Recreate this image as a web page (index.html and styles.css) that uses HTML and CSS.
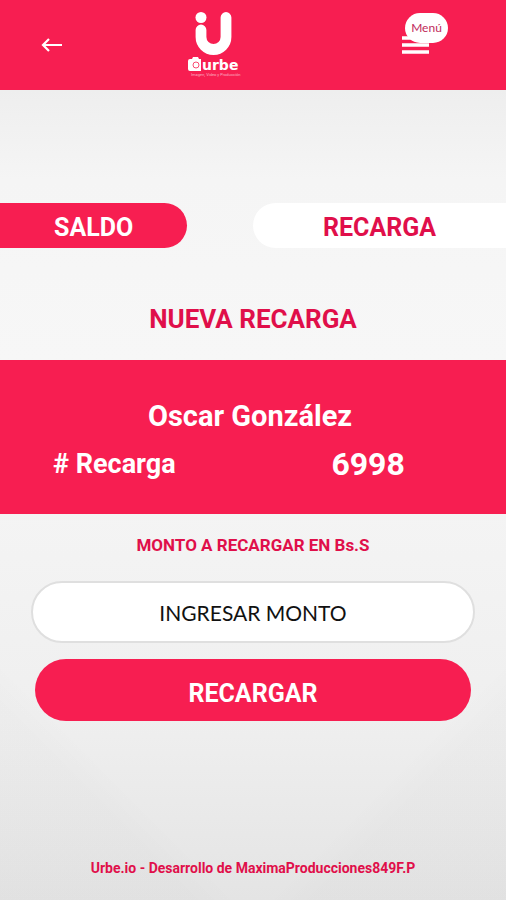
FILE: index.html
```html
<!DOCTYPE html>
<html lang="es">

<head>
    <meta charset="UTF-8">
    <meta name="viewport" content="width=device-width, initial-scale=1.0">
    <title>Urbe - Nueva Recarga</title>
    <link rel="stylesheet" href="styles.css">
</head>

<body>
    <header class="topbar">
        <button type="button" class="back" aria-label="Volver">
            <svg width="22" height="16" viewBox="0 0 22 16">
                <path d="M21 8H2M8 2L2 8l6 6" fill="none" stroke="#fff" stroke-width="2.2" />
            </svg>
        </button>
        <a href="#" class="logo" aria-label="Urbe">
            <svg width="54" height="66" viewBox="0 0 54 66">
                <circle cx="14" cy="5.5" r="5.5" fill="#fff" />
                <path d="M14 18v7a12.5 12.5 0 0 0 25 0V5.5" fill="none" stroke="#fff" stroke-width="10.8" stroke-linecap="round" />
                <path d="M3 47h2l1-2h5l1 2h2v12H3a2 2 0 0 1-2-2v-8a2 2 0 0 1 2-2z" fill="#fff" />
                <circle cx="9" cy="53" r="3" fill="none" stroke="#f71e51" stroke-width=".8" />
                <text x="15" y="58" class="logo-name">urbe</text>
                <text x="4" y="64" class="logo-tagline">Imagen, Video y Producción</text>
            </svg>
        </a>
        <button type="button" class="menu">
            <svg width="28" height="18" viewBox="0 0 28 18">
                <path d="M0 2h27M0 9h27M0 16h27" stroke="#fff" stroke-width="3.4" />
            </svg>
            <span class="menu-label">Menú</span>
        </button>
    </header>

    <main>
        <nav class="tabs">
            <a href="#" class="tab tab-saldo">SALDO</a>
            <a href="#" class="tab tab-recarga">RECARGA</a>
        </nav>

        <h1>NUEVA RECARGA</h1>

        <section class="account">
            <h2>Oscar González</h2>
            <div class="account-row">
                <span class="account-label"># Recarga</span>
                <span class="account-number">6998</span>
            </div>
        </section>

        <form class="recharge">
            <label for="monto">MONTO A RECARGAR EN Bs.S</label>
            <input type="text" id="monto" inputmode="decimal" placeholder="INGRESAR MONTO">
            <button type="submit" class="submit">RECARGAR</button>
        </form>
    </main>

    <footer>Urbe.io - Desarrollo de MaximaProducciones849F.P</footer>
</body>

</html>
```

FILE: styles.css
```css
* {
    box-sizing: border-box;
}

body {
    font-family: Roboto, Arial, sans-serif;
    margin: 0;
    min-height: 100vh;
    display: flex;
    flex-direction: column;
    color: #e00f4a;
    background:
        linear-gradient(45deg, rgba(0, 0, 0, 0.012) 14%, transparent 17%),
        linear-gradient(-45deg, rgba(0, 0, 0, 0.012) 14%, transparent 17%),
        linear-gradient(#eeeeee 10%, #f5f5f5 20%, #f7f7f7 40%, #f3f3f3 62%, #efefef 80%, #e4e4e4 100%);
}

button {
    font-family: inherit;
    border: 0;
    padding: 0;
    background: none;
    cursor: pointer;
}

svg {
    display: block;
}

/* top bar */
.topbar {
    display: flex;
    align-items: center;
    height: 90px;
    padding: 0 76px 0 41px;
    background: #f71e51;
}

.logo {
    margin-left: 32%;
}

.logo-name {
    font: bold 14px "DejaVu Sans", sans-serif;
    fill: #fff;
}

.logo-tagline {
    font: 4px Roboto, sans-serif;
    fill: #fbb0c2;
}

.menu {
    position: relative;
    margin-left: auto;
}

.menu-label {
    position: absolute;
    left: 3px;
    bottom: 11px;
    width: 43px;
    border-radius: 16px;
    font: 12px/30px Lato, sans-serif;
    color: #c02a5c;
    background: #fff;
}

/* tabs */
.tabs {
    display: flex;
    justify-content: space-between;
    margin-top: 113px;
}

.tab {
    font-size: 25px;
    font-weight: bold;
    line-height: 50px;
    height: 45px;
    text-align: center;
    text-decoration: none;
}

.tab-saldo {
    width: 37%;
    border-radius: 0 24px 24px 0;
    color: #fff;
    background: #f71e51;
}

.tab-recarga {
    width: 50%;
    border-radius: 24px 0 0 24px;
    color: #e00f4a;
    background: #fff;
}

h1 {
    margin: 54px 0 24px;
    font-size: 26px;
    line-height: 34px;
    text-align: center;
}

/* account */
.account {
    padding: 36px 0 30px;
    color: #fff;
    background: #f71e51;
}

h2 {
    margin: 0 0 8px;
    padding-right: 6px;
    font-size: 29px;
    line-height: 40px;
    text-align: center;
}

.account-row {
    display: flex;
    justify-content: space-between;
    padding: 0 20% 0 53px;
    font-weight: bold;
    line-height: 40px;
}

.account-label {
    font-size: 27px;
}

.account-number {
    font-size: 32px;
}

/* form */
.recharge {
    display: flex;
    flex-direction: column;
    padding: 19px 31px 0;
    text-align: center;
}

.recharge label {
    font-size: 17px;
    font-weight: bold;
    line-height: 24px;
}

.recharge input {
    height: 62px;
    margin: 24px 0 16px;
    border: 2px solid #dfdfdf;
    border-radius: 31px;
    font: 21px Lato, sans-serif;
    text-align: center;
    background: #fff;
}

.recharge input::placeholder {
    color: #111;
    opacity: 1;
}

.submit {
    height: 62px;
    margin: 0 4px;
    border-radius: 31px;
    font-size: 25px;
    font-weight: bold;
    line-height: 70px;
    color: #fff;
    background: #f71e51;
}

footer {
    margin-top: auto;
    padding: 16px 0 20px;
    font-size: 14px;
    font-weight: bold;
    line-height: 24px;
    text-align: center;
}
```
